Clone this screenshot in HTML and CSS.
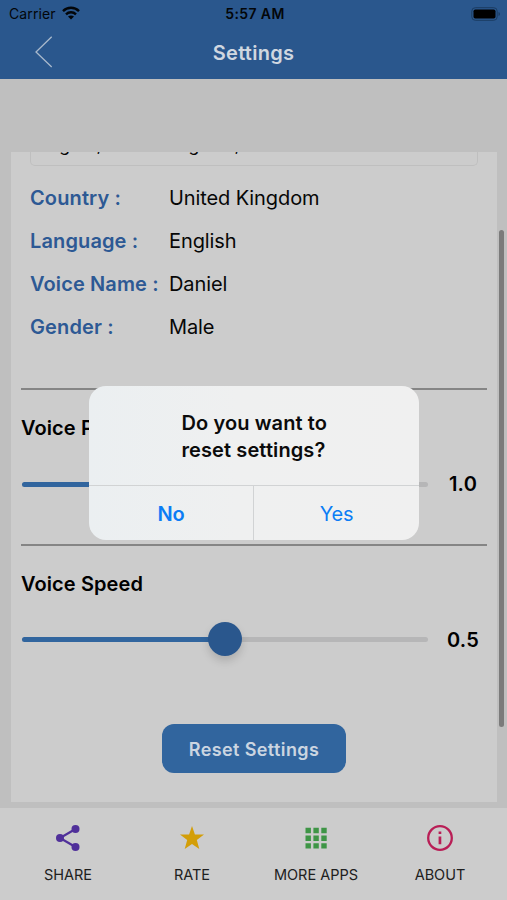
FILE: index.html
```html
<!DOCTYPE html>
<html lang="en">
<head>
<meta charset="utf-8">
<title>Settings</title>
<link rel="stylesheet" href="styles.css">
</head>
<body>
<div class="screen">
  <header class="header">
    <div class="status">
      <div class="carrier"><span>Carrier</span>
        <svg width="18" height="14" viewBox="0 0 18 14" fill="none" stroke="#030609" stroke-width="2.4"><path d="M1 5.1C5.4.7 12.600.7 17 5.1"/><path d="M4 8.300c2.800-2.700 7.200-2.700 10 0"/><path d="M6 10.600c1.700-1.500 4.300-1.500 6 0l-3 3z" fill="#030609" stroke="none"/></svg>
      </div>
      <div class="time">5:57 AM</div>
      <div class="power"><svg width="30" height="14" viewBox="0 0 30 14"><rect x=".8" y=".7" width="25.400" height="12.600" rx="3.500" fill="none" stroke="#1b3c62"/><rect x="2.500" y="2.400" width="22" height="9.200" rx="1.800" fill="#000"/><path d="M27.500 5v4q1.500-.6 1.500-2t-1.500-2" fill="#1b3c62"/></svg></div>
    </div>
    <div class="nav">
      <svg class="back" width="18" height="32" viewBox="0 0 18 32" fill="none" stroke="#a9b9cc" stroke-width="1.300"><path d="M16.700.7 1 16l15.700 15"/></svg>
      <h1>Settings</h1>
    </div>
  </header>
  <main class="content">
    <section class="card">
      <div class="select"><span>English, United Kingdom, Daniel</span></div>
      <dl class="details">
        <dt>Country :</dt><dd>United Kingdom</dd>
        <dt>Language :</dt><dd>English</dd>
        <dt>Voice Name :</dt><dd>Daniel</dd>
        <dt>Gender :</dt><dd>Male</dd>
      </dl>
      <div class="control">
        <h2>Voice Pitch</h2>
        <div class="slider-row"><div class="track"><div class="fill"></div><div class="thumb"></div></div><output>1.0</output></div>
      </div>
      <div class="control">
        <h2>Voice Speed</h2>
        <div class="slider-row"><div class="track"><div class="fill"></div><div class="thumb"></div></div><output>0.5</output></div>
      </div>
      <button class="reset">Reset Settings</button>
    </section>
    <div class="scrollbar"></div>
  </main>
  <nav class="tabs">
    <a class="tab"><svg width="28" height="28" viewBox="0 0 28 28" fill="#50309a"><path d="M21.500 5 6 14l15.500 9" fill="none" stroke="#50309a" stroke-width="2.200"/><circle cx="21.500" cy="5" r="4"/><circle cx="6" cy="14" r="4"/><circle cx="21.500" cy="23" r="4"/></svg><span>SHARE</span></a>
    <a class="tab"><svg width="28" height="28" viewBox="0 0 28 28" fill="#d39e08"><path d="m14 2 2.900 8.400 9.100.2-7.200 5.500 2.500 9L14 20l-7.300 5.100 2.500-9L2 10.600l9.100-.2z"/></svg><span>RATE</span></a>
    <a class="tab"><svg width="28" height="28" viewBox="0 0 28 28" fill="#3e9546"><path d="M3.500 3.800h5.400v5.400H3.500zm7.900 0h5.400v5.400h-5.400zm7.900 0h5.400v5.400h-5.400zM3.500 11.500h5.400v5.400H3.500zm7.900 0h5.400v5.400h-5.400zm7.900 0h5.400v5.400h-5.400zM3.500 19.200h5.400v5.400H3.500zm7.900 0h5.400v5.400h-5.400zm7.900 0h5.400v5.400h-5.400z"/></svg><span>MORE APPS</span></a>
    <a class="tab"><svg width="28" height="28" viewBox="0 0 28 28"><circle cx="14" cy="14" r="11.800" fill="none" stroke="#b91e56" stroke-width="2.300"/><path d="M12.600 7.600h2.700v2.500h-2.700zm0 5h2.700v7.600h-2.700z" fill="#b91e56"/></svg><span>ABOUT</span></a>
  </nav>
</div>
<div class="dialog" role="alertdialog">
  <p>Do you want to<br>reset settings?</p>
  <div class="actions"><button class="no">No</button><button class="yes">Yes</button></div>
</div>
</body>
</html>
```
FILE: styles.css
```css
* { box-sizing: border-box; }
body { margin: 0; font-family: Inter, "Liberation Sans", sans-serif; color: #070707; }
h1, h2, p, dl, dd { margin: 0; }
button { border: 0; padding: 0; font: inherit; background: none; }
svg { display: block; flex: none; }
.screen { width: 507px; height: 900px; display: flex; flex-direction: column; overflow: hidden; background: #bfbfbf; }

.header { height: 79px; background: #2a578d; flex: none; }
.status { display: grid; grid-template-columns: 1fr auto 1fr; height: 27px; align-items: center; padding: 0 6px 0 9px; color: #030609; font-size: 14px; }
.carrier { display: flex; align-items: center; gap: 6px; letter-spacing: .1px; }
.carrier svg { margin-top: -1px; }
.time { font-weight: 600; letter-spacing: .4px; }
.power { display: flex; justify-content: flex-end; }
.nav { display: grid; grid-template-columns: 1fr auto 1fr; align-items: center; height: 50px; }
.back { margin-left: 35px; }
.nav h1 { font-size: 20px; font-weight: 600; color: #d0d7e0; letter-spacing: .25px; padding-top: 1px; }

.content { position: relative; height: 729px; padding: 73px 10px 6px 11px; flex: none; }
.card { height: 650px; overflow: hidden; background: #ccc; display: flex; flex-direction: column; }
.select { height: 14px; margin: 0 19px; border: 1px solid #bfbfbf; border-top: 0; border-radius: 0 0 5px 5px; display: flex; align-items: flex-end; padding: 0 0 10px 8px; font-size: 17.500px; line-height: 20px; letter-spacing: -.3px; flex: none; }
.details { display: grid; grid-template-columns: 139px 1fr; grid-auto-rows: 43.200px; align-items: center; margin: 10px 20px 39px 19px; font-size: 20px; letter-spacing: -.1px; height: 173px; }
.details dt { color: #2d5994; font-weight: 600; letter-spacing: .12px; white-space: nowrap; }
.control { height: 155.500px; margin: 0 10px; border-top: 2px solid #858585; padding: 24px 0 0 1px; flex: none; }
.control h2 { font-size: 20px; line-height: 28px; font-weight: 600; letter-spacing: .1px; color: #000; margin-left: -1px; }
.slider-row { display: grid; grid-template-columns: 406px 1fr; align-items: center; height: 34px; margin-top: 25px; }
.track { position: relative; height: 5px; border-radius: 3px; background: #b6b6b7; }
.fill { width: 50%; height: 100%; border-radius: 3px; background: #31659e; }
.thumb { position: absolute; left: 50%; top: 50%; width: 34px; height: 34px; margin: -18px 0 0 -17px; border-radius: 50%; background: #2a578d; box-shadow: 0 5px 9px rgba(0, 0, 0, .15); }
.slider-row output { font-size: 20px; font-weight: 600; text-align: center; padding-left: 11px; letter-spacing: .2px; color: #000; }
.reset { width: 184px; height: 49px; margin: 25px auto 0 151px; padding-top: 1px; border-radius: 12px; background: #31659e; color: #cbd5e1; font-size: 18px; font-weight: 600; letter-spacing: .4px; flex: none; }
.scrollbar { position: absolute; right: 3px; top: 151px; width: 5px; height: 497px; border-radius: 3px; background: #7b7b7b; }

.tabs { height: 92px; display: grid; grid-template-columns: repeat(4, 124px); padding-left: 6px; background: #ccc; }
.tab { display: flex; flex-direction: column; align-items: center; padding-top: 16px; font-size: 14.500px; line-height: 18px; gap: 14px; color: #202020; letter-spacing: 0; }

.dialog { position: absolute; left: 89px; top: 386px; width: 330px; height: 154px; border-radius: 17px; overflow: hidden; background: linear-gradient(90deg, #ebeff1, #eff0f0 45%, #f0f0f0); color: #0b0b0b; }
.dialog p { height: 99px; padding: 24px 0 0 92.500px; font-size: 20px; line-height: 27px; font-weight: 600; letter-spacing: .1px; white-space: nowrap; }
.actions { display: grid; grid-template-columns: 1fr 1fr; height: 55px; border-top: 1px solid #d1d3d4; }
.actions button { color: #0b7df5; font-size: 20px; letter-spacing: -.2px; padding-top: 2px; }
.actions .no { font-weight: 600; border-right: 1px solid #d1d3d4; }
```
